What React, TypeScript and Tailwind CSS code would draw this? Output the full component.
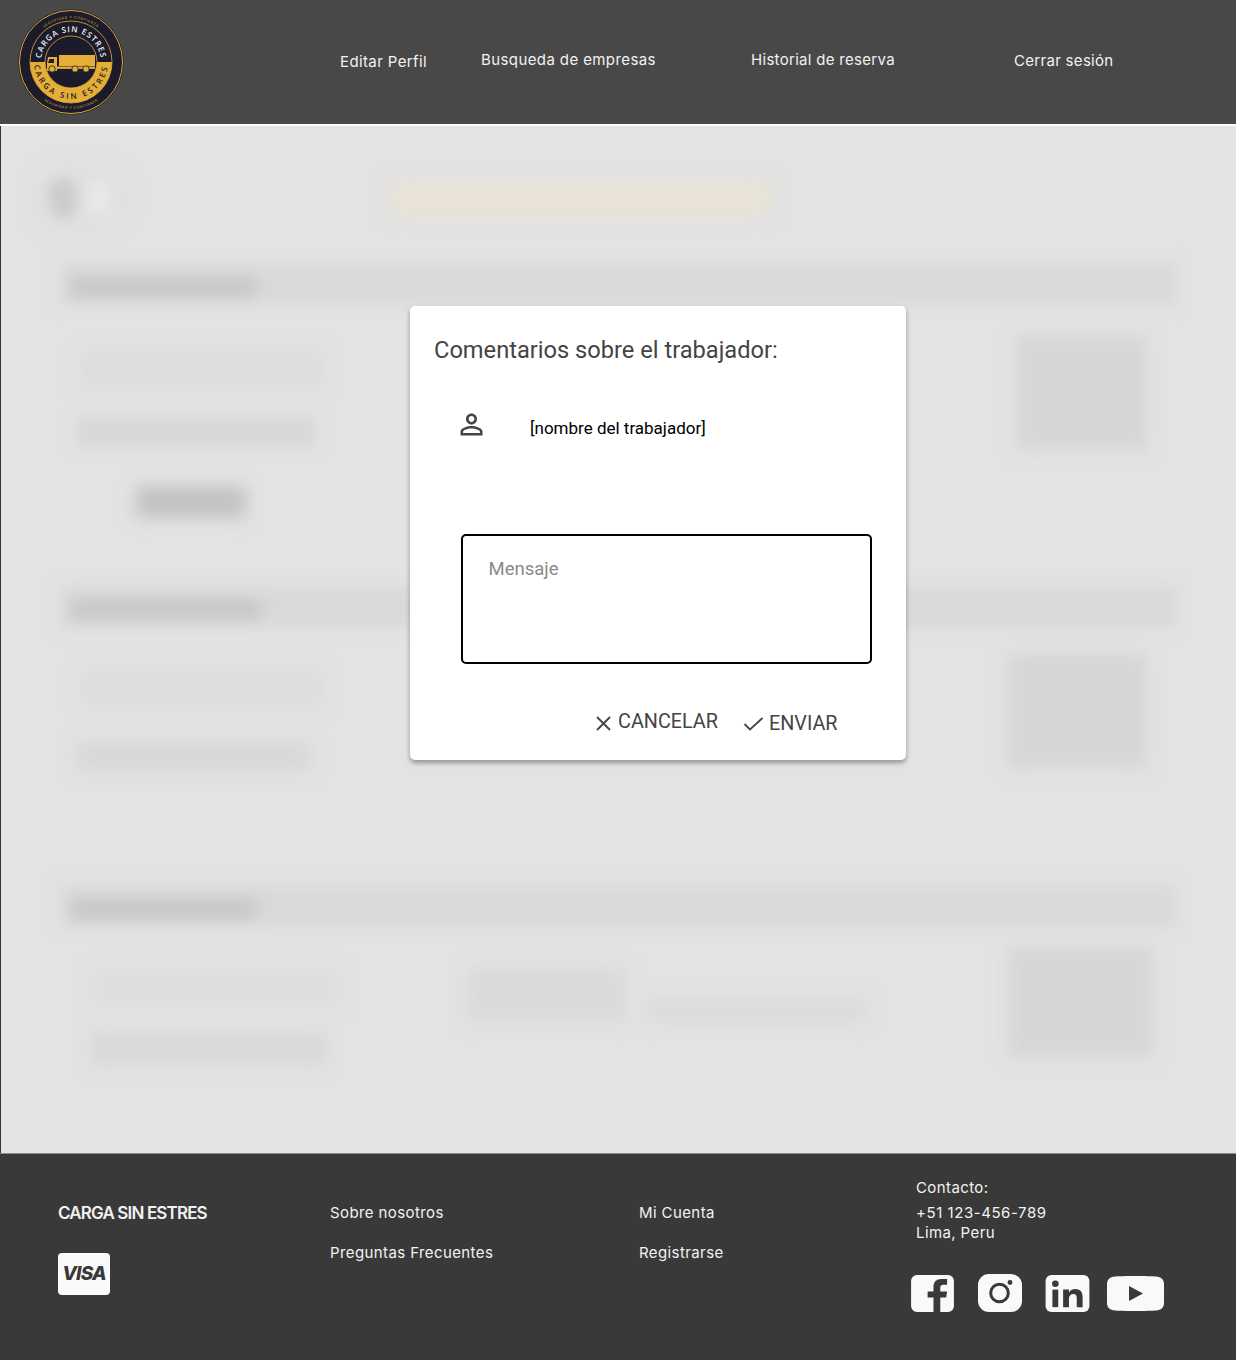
const navFont = { fontFamily: 'Inter, sans-serif' };

function Logo() {
  return (
    <svg width="108" height="108" viewBox="0 0 108 108" className="shrink-0">
      <defs>
        <path id="topArc" d="M 24 54 A 30 30 0 0 1 84 54" />
        <path id="botArc" d="M 17 54 A 37 37 0 0 0 91 54" />
        <path id="smallTop" d="M 10.500 54 A 43.500 43.500 0 0 1 97.500 54" />
        <path id="smallBot" d="M 7 54 A 47 47 0 0 0 101 54" />
      </defs>
      <circle cx="54" cy="54" r="52.5" fill="#1b1b2b" />
      <circle cx="54" cy="54" r="51.5" fill="none" stroke="#e0aa36" strokeWidth="1" />
      <path d="M 13 54 A 41 41 0 0 0 95 54 Z" fill="#e5ae37" />
      <circle cx="54" cy="54" r="41" fill="none" stroke="#e0aa36" strokeWidth="0.8" />
      <circle cx="54" cy="54" r="26" fill="#1b1b2b" stroke="#e0aa36" strokeWidth="0.8" />
      <text fontSize="8" fill="#f2f2f2" letterSpacing="1" fontFamily="Open Sans, sans-serif" fontWeight="600">
        <textPath href="#topArc" startOffset="50%" textAnchor="middle">CARGA SIN ESTRES</textPath>
      </text>
      <text fontSize="8" fill="#1b1b2b" letterSpacing="2.4" fontFamily="Open Sans, sans-serif" fontWeight="600">
        <textPath href="#botArc" startOffset="50%" textAnchor="middle">CARGA SIN ESTRES</textPath>
      </text>
      <text fontSize="3.6" fill="#b88d2f" letterSpacing="0.6" fontFamily="Open Sans, sans-serif" fontWeight="600">
        <textPath href="#smallTop" startOffset="50%" textAnchor="middle">SEGURIDAD Y CONFIANZA</textPath>
      </text>
      <text fontSize="3.6" fill="#b88d2f" letterSpacing="0.6" fontFamily="Open Sans, sans-serif" fontWeight="600">
        <textPath href="#smallBot" startOffset="50%" textAnchor="middle">SEGURIDAD Y CONFIANZA</textPath>
      </text>
      {/* camion */}
      <rect x="42" y="47" width="36" height="11" fill="#e5ae37" />
      <path d="M31 49 h9 v14 h-10 v-8 z" fill="#e5ae37" />
      <path d="M32.500 51 h4.500 v4 h-6 z" fill="#1b1b2b" />
      <rect x="40" y="58.500" width="38" height="2.400" fill="#e5ae37" />
      <circle cx="35" cy="61" r="3.200" fill="#e5ae37" stroke="#1b1b2b" strokeWidth="0.8" />
      <circle cx="58" cy="61" r="3.200" fill="#e5ae37" stroke="#1b1b2b" strokeWidth="0.8" />
      <circle cx="69" cy="61" r="3.200" fill="#e5ae37" stroke="#1b1b2b" strokeWidth="0.8" />
    </svg>
  );
}

function Header() {
  return (
    <header className="flex h-[126px] border-b-2 border-white bg-[#484848] pl-[17px] text-white" style={navFont}>
      <div className="mt-[8px]">
        <Logo />
      </div>
      <nav className="text-[15px] tracking-[0.3px] text-[#f2f2f2]">
        <div className="flex">
          <a className="ml-[215px] mt-[51px] w-[141px] tracking-[0.38px]">Editar Perfil</a>
          <a className="mt-[49px] w-[270px] tracking-[0.4px]">Busqueda de empresas</a>
          <a className="mt-[49px] w-[263px]">Historial de reserva</a>
          <a className="mt-[50px]">Cerrar sesión</a>
        </div>
      </nav>
    </header>
  );
}

// bloque borroso de la pagina de atras
function Blur({ className }: { className: string }) {
  return <div className={`rounded-sm blur-[8px] ${className}`} />;
}

function Band({ nameW }: { nameW: string }) {
  return (
    <div className="-mx-[3px] flex h-[42px] items-center bg-[#d9d9d9] pl-[10px] blur-[7px]">
      <div className={`mt-[6px] h-[22px] bg-[#c9c9c9] ${nameW}`} />
    </div>
  );
}

function BlurredPage() {
  return (
    <div className="h-[1027px] overflow-hidden border-l border-[#333] bg-[#e3e3e3]">
      <div className="flex h-[137px] items-center pl-[30px] pt-[6px]">
        <div className="flex h-[74px] w-[100px] items-center rounded-full bg-[#e0e0e0] pl-[18px] blur-[7px]">
          <div className="h-[40px] w-[28px] rounded-full bg-[#cbcbcb]" />
          <div className="ml-[8px] h-[36px] w-[26px] rounded-full bg-[#e8e8e8]" />
        </div>
        <Blur className="ml-[259px] h-[34px] w-[380px] bg-[#e8e3d5]" />
      </div>

      <section className="mx-[63px]">
        <Band nameW="w-[185px]" />
        <div className="flex justify-between pr-[26px]">
          <div>
            <Blur className="ml-[16px] mt-[46px] h-[36px] w-[245px] bg-[#dddddd]" />
            <Blur className="ml-[12px] mt-[32px] h-[26px] w-[240px] bg-[#d6d6d6]" />
            <Blur className="ml-[72px] mt-[41px] h-[32px] w-[110px] bg-[#c3c3c3]" />
          </div>
          <Blur className="mt-[30px] h-[115px] w-[130px] bg-[#d6d6d6]" />
        </div>
      </section>

      <section className="mx-[63px] mt-[68px]">
        <Band nameW="w-[190px]" />
        <div className="flex justify-between pr-[26px]">
          <div>
            <Blur className="ml-[16px] mt-[42px] h-[36px] w-[245px] bg-[#dddddd]" />
            <Blur className="ml-[12px] mt-[36px] h-[30px] w-[235px] bg-[#d8d8d8]" />
          </div>
          <Blur className="mt-[25px] h-[115px] w-[140px] bg-[#d6d6d6]" />
        </div>
      </section>

      <section className="mx-[63px] mt-[113px]">
        <Band nameW="w-[185px]" />
        <div className="flex justify-between pr-[20px]">
          <div className="ml-[27px] mt-[42px] w-[250px]">
            <Blur className="h-[38px] w-[250px] bg-[#dedede]" />
            <Blur className="mt-[26px] h-[32px] w-[235px] bg-[#d8d8d8]" />
          </div>
          <div className="ml-[125px] mt-[39px] flex h-[56px] flex-1 items-end">
            <Blur className="h-[54px] w-[160px] bg-[#dadada]" />
            <Blur className="ml-[22px] h-[24px] w-[220px] bg-[#dbdbdb]" />
          </div>
          <Blur className="mt-[20px] h-[110px] w-[145px] bg-[#d6d6d6]" />
        </div>
      </section>
    </div>
  );
}

function CommentModal() {
  return (
    <div
      className="absolute left-[410px] top-[306px] h-[454px] w-[496px] rounded-[5px] bg-white pl-[24px] text-[#444] shadow-[0_3px_5px_rgba(0,0,0,0.35)]"
      style={{ fontFamily: 'Roboto, sans-serif' }}
    >
      <h2 className="pt-[29px] text-[23.65px] leading-[30px]">Comentarios sobre el trabajador:</h2>
      <div className="mt-[43px] flex items-center">
        <svg width="33" height="33" viewBox="0 0 24 24" fill="#444" className="ml-[21px]">
          <path d="M12 5.900c1.160 0 2.100.94 2.100 2.100s-.94 2.100-2.100 2.100S9.900 9.160 9.900 8s.94-2.100 2.100-2.100m0 9c2.970 0 6.100 1.460 6.100 2.100v1.100H5.900V17c0-.64 3.130-2.100 6.100-2.100M12 4C9.790 4 8 5.790 8 8s1.790 4 4 4 4-1.790 4-4-1.790-4-4-4zm0 9c-2.670 0-8 1.340-8 4v3h16v-3c0-2.660-5.330-4-8-4z" />
        </svg>
        <span className="ml-[42px] mt-[8px] text-[17px] text-black">[nombre del trabajador]</span>
      </div>
      <div className="ml-[27px] mt-[92px] h-[130px] w-[411px] rounded-[5px] border-[2.500px] border-black pl-[25.500px] pt-[21px] text-[18.500px] leading-[24px] text-[#8a8a8a]">
        Mensaje
      </div>
      <div className="ml-[160px] mt-[45px] flex items-center text-[19.800px] leading-[24px] text-[#444]">
        <svg width="17" height="17" viewBox="0 0 17 17" fill="none" stroke="#444" strokeWidth="1.800" className="ml-[1px] mt-[3px] shrink-0">
          <path d="M2 2 L15 15 M15 2 L2 15" />
        </svg>
        <span className="ml-[6px]">CANCELAR</span>
        <svg width="21" height="16" viewBox="0 0 21 16" fill="none" stroke="#444" strokeWidth="1.800" className="ml-[25px] mt-[3px] shrink-0">
          <path d="M1.500 8 L7 13.500 L19.500 2" />
        </svg>
        <span className="ml-[5px] mt-[3px]">ENVIAR</span>
      </div>
    </div>
  );
}

function SocialIcons() {
  return (
    <div className="ml-[-5px] mt-[31px] flex items-center">
      <svg width="43" height="37" viewBox="0 0 44 38">
        <path
          fill="#f9f9f9"
          d="M6 0 H38 a6 6 0 0 1 6 6 V32 a6 6 0 0 1 -6 6 H30 V23 h6 l1 -6 h-7 v-4 c0 -2 1 -3 3 -3 h4 V4 h-6 c-5 0 -8 3 -8 8 v5 h-6 v6 h6 v15 H6 a6 6 0 0 1 -6 -6 V6 a6 6 0 0 1 6 -6 z"
        />
      </svg>
      <svg width="44" height="38" viewBox="0 0 44 38" className="ml-[24px]">
        <rect width="44" height="38" rx="11" fill="#f9f9f9" />
        <circle cx="21.500" cy="19" r="8.800" fill="none" stroke="#393939" strokeWidth="3" />
        <circle cx="32" cy="8.500" r="2.400" fill="#393939" />
      </svg>
      <svg width="45" height="37" viewBox="0 0 45 38" className="ml-[23px]">
        <rect width="45" height="38" rx="6" fill="#f9f9f9" />
        <circle cx="10" cy="9" r="3.400" fill="#393939" />
        <rect x="7" y="15" width="6" height="18" fill="#393939" />
        <path
          fill="#393939"
          d="M18 15 h6 v3 c1.500 -2.400 3.600 -3.500 6.500 -3.500 c5 0 7.500 3 7.500 8 V33 h-6 V24 c0 -3 -1 -4.500 -3.500 -4.500 c-2.600 0 -4.500 1.700 -4.500 4.800 V33 h-6 z"
        />
      </svg>
      <svg width="57" height="35" viewBox="0 0 57 35" className="ml-[17px]">
        <path
          fill="#f9f9f9"
          d="M8 0.500 C20 -0.200 37 -0.200 49 0.500 C54 0.800 57 3.500 57 8 V27 C57 31.500 54 34.200 49 34.500 C37 35.200 20 35.200 8 34.500 C3 34.200 0 31.500 0 27 V8 C0 3.500 3 0.800 8 0.500 Z"
        />
        <path fill="#393939" d="M22 10 L36 17.500 L22 25 Z" />
      </svg>
    </div>
  );
}

function Footer() {
  return (
    <footer className="relative h-[207px] border-t border-[#8a8a8a] bg-[#393939] text-[15px] tracking-[0.4px] text-[#f2f2f2]" style={navFont}>
      <div className="flex">
        <div className="ml-[58px] mt-[48px] w-[272px]">
          <div className="text-[17px] font-semibold leading-[22px] tracking-[-0.85px]">CARGA SIN ESTRES</div>
          <div className="mt-[29px] flex h-[42px] w-[52px] items-center justify-center rounded-[4px] bg-[#f9f9f9] text-[19px] font-extrabold italic tracking-[-0.8px] text-[#393939]">
            VISA
          </div>
        </div>
        <div className="mt-[49px] w-[309px] leading-[20px]">
          <div>Sobre nosotros</div>
          <div className="mt-[20px]">Preguntas Frecuentes</div>
        </div>
        <div className="mt-[49px] w-[277px] leading-[20px]">
          <div>Mi Cuenta</div>
          <div className="mt-[20px]">Registrarse</div>
        </div>
        <div className="mt-[24px] leading-[20px]">
          <div className="mb-[5px]">Contacto:</div>
          <div className="tracking-[0.55px]">+51 123-456-789</div>
          <div>Lima, Peru</div>
          <SocialIcons />
        </div>
      </div>
    </footer>
  );
}

export default function App() {
  return (
    <div className="relative h-[1360px] w-[1236px] overflow-hidden">
      <Header />
      <BlurredPage />
      <Footer />
      <CommentModal />
    </div>
  );
}
